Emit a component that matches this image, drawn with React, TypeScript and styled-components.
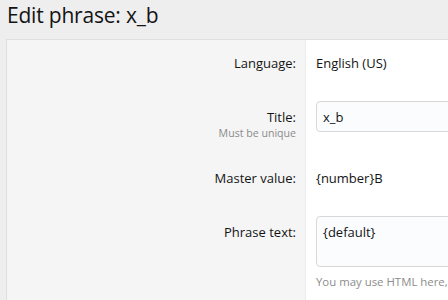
import styled, { createGlobalStyle } from "styled-components";

const GlobalStyle = createGlobalStyle`
  html, body {
    margin: 0;
    padding: 0;
    background: #eeeeee;
    overflow: hidden;
  }
  body {
    font-family: "Open Sans", "Noto Sans", sans-serif;
    color: #141414;
  }
`;

const Page = styled.div`
  padding: 0 0 0 6px;
  width: 760px;
`;

const PageTitle = styled.h1`
  margin: 0;
  height: 39px;
  padding-left: 1px;
  font-size: 21px;
  font-weight: 400;
  line-height: 31px;
  color: #141414;
  letter-spacing: -0.2px;
`;

const Block = styled.div`
  border: 1px solid #dfdfdf;
  border-right: none;
  background: #ffffff;
`;

const Row = styled.div`
  display: grid;
  grid-template-columns: 299px 1fr;
`;

const Label = styled.div<{ $offset?: number }>`
  background: #f5f5f5;
  border-right: 1px solid #ececec;
  text-align: right;
  padding: ${(p) => 13 + (p.$offset ?? 0)}px 9px 15px 10px;
  font-size: 13px;
  line-height: 20px;
`;

const Hint = styled.div`
  font-size: 10.6px;
  line-height: 13px;
  color: #8c8c8c;
`;

const Value = styled.div`
  padding: 13px 10px 15px 10px;
  font-size: 13px;
  line-height: 20px;
`;

const TextInput = styled.div<{ $tall?: boolean }>`
  width: 320px;
  height: ${(p) => (p.$tall ? 51 : 31)}px;
  box-sizing: border-box;
  border: 1px solid #d8d8d8;
  border-radius: 4px;
  background: #fafcfe;
  padding: 5px 6px;
  font-size: 13px;
  line-height: 20px;
`;

const Explain = styled.div`
  margin-top: 7px;
  font-size: 11.4px;
  line-height: 16px;
  color: #8c8c8c;
  white-space: nowrap;
`;

export default function App() {
  return (
    <>
      <GlobalStyle />
      <Page>
        <PageTitle>Edit phrase: x_b</PageTitle>
        <Block>
          <Row>
            <Label>Language:</Label>
            <Value>English (US)</Value>
          </Row>
          <Row>
            <Label $offset={6}>
              Title:
              <Hint>Must be unique</Hint>
            </Label>
            <Value>
              <TextInput>x_b</TextInput>
            </Value>
          </Row>
          <Row>
            <Label>Master value:</Label>
            <Value>{"{number}B"}</Value>
          </Row>
          <Row>
            <Label $offset={6}>Phrase text:</Label>
            <Value>
              <TextInput $tall>{"{default}"}</TextInput>
              <Explain>You may use HTML here,</Explain>
            </Value>
          </Row>
        </Block>
      </Page>
    </>
  );
}
